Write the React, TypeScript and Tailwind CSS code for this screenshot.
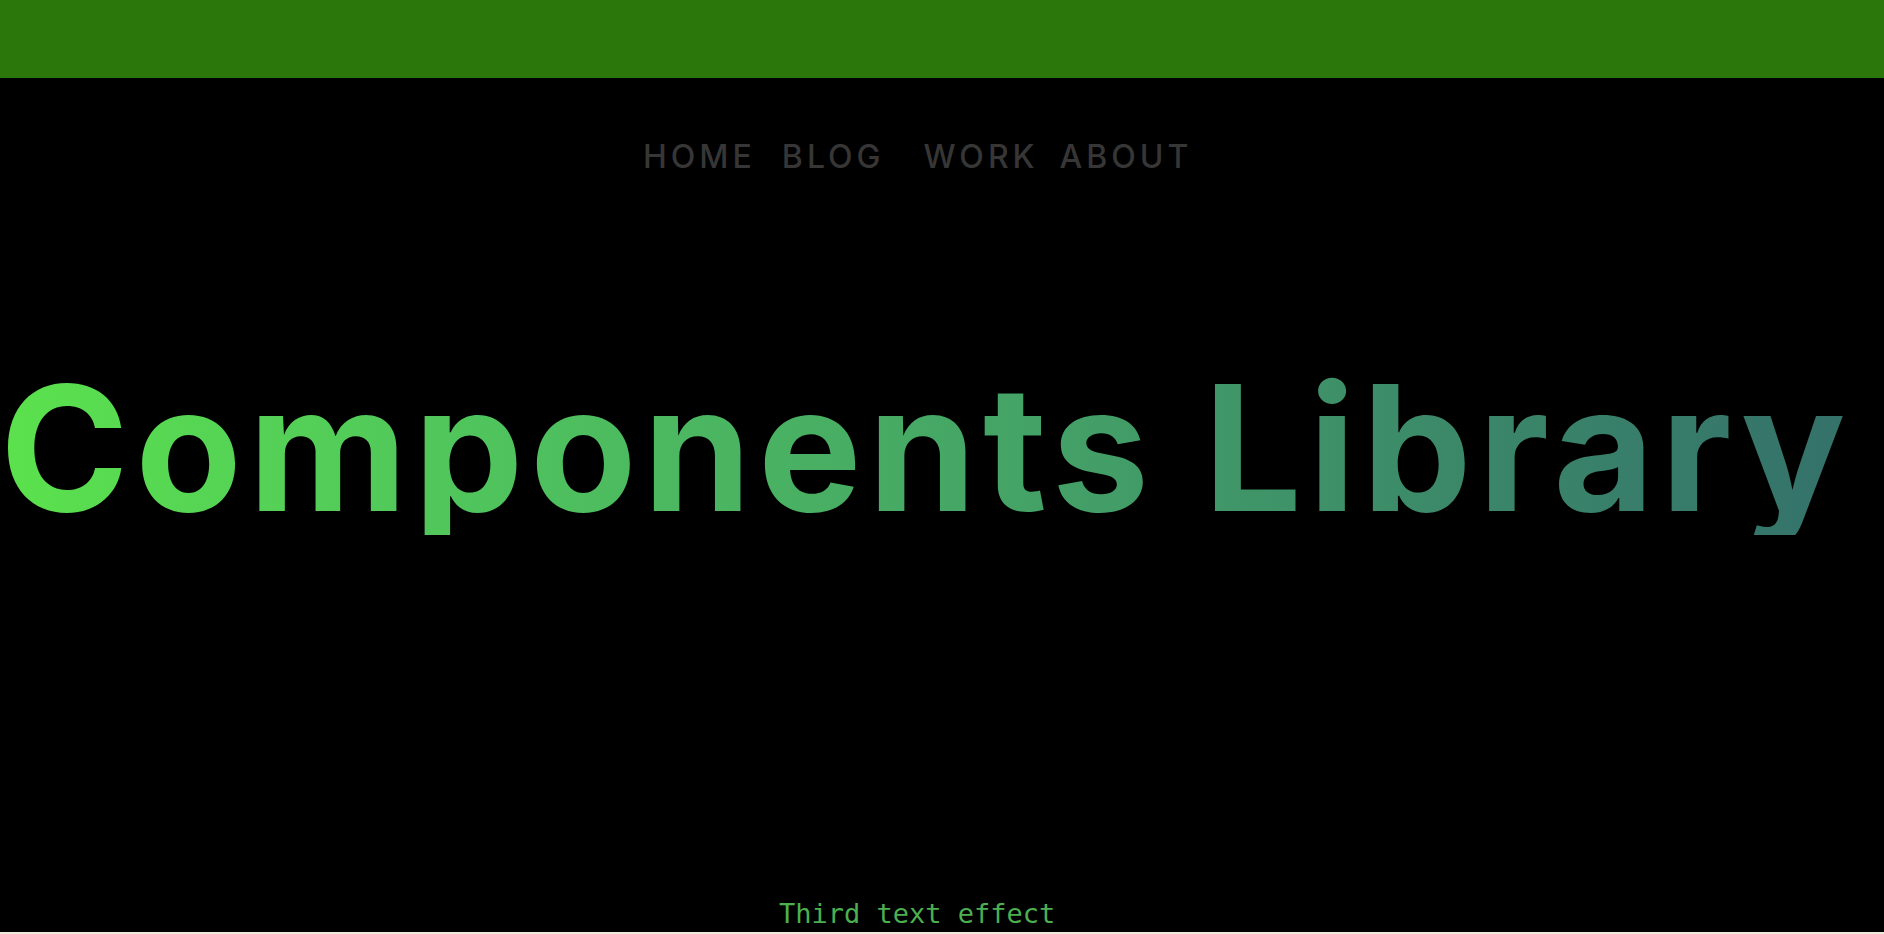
const navLinks = [
  { label: 'HOME', gap: 'mr-[26px]' },
  { label: 'BLOG', gap: 'mr-[39px]' },
  { label: 'WORK', gap: 'mr-[21px]' },
  { label: 'ABOUT', gap: '' },
];

export default function App() {
  return (
    <div className="min-h-screen bg-[#efe9dd]">
      <div className="h-[932px] bg-black flex flex-col">
        <header className="h-[78px] shrink-0 bg-[#2c770c]" />

        <nav className="flex justify-start pl-[643px] pt-[63px] font-['Inter',sans-serif] text-[32px] leading-none font-medium tracking-[4px] text-[#363636]">
          {navLinks.map((link) => (
            <a key={link.label} href="#" className={link.gap}>
              {link.label}
            </a>
          ))}
        </nav>

        <h1 className="mt-[188px] w-fit whitespace-nowrap font-['Inter',sans-serif] text-[174px] leading-none font-bold tracking-[6.5px] bg-gradient-to-r from-[#5be24c] to-[#34716a] bg-clip-text text-transparent">
          Components Library
        </h1>

        <p className="mt-auto mb-[5px] pl-[779px] font-['DejaVu_Sans_Mono',monospace] text-[27px] leading-none text-[#4caf50]">
          Third text effect
        </p>
      </div>
    </div>
  );
}
